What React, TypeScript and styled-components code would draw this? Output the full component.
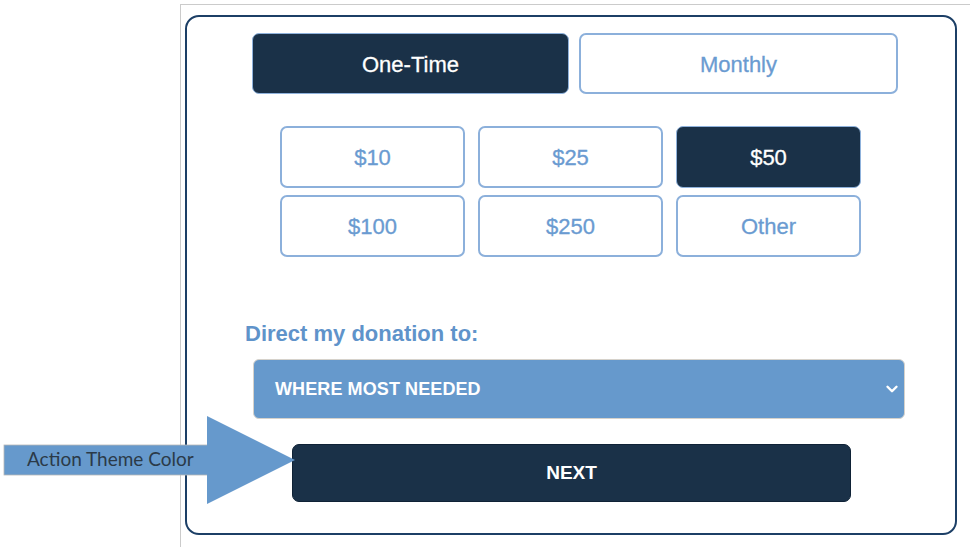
import React, { useState } from 'react'
import styled, { createGlobalStyle } from 'styled-components'
import { ChevronDown } from 'lucide-react'

const GlobalStyle = createGlobalStyle`
  html, body {
    margin: 0;
    padding: 0;
    background: #ffffff;
  }

  * {
    box-sizing: border-box;
  }
`

const NAVY = '#1a3148'
const LIGHT = '#6a9bd1'

const Page = styled.div`
  position: relative;
  width: 975px;
  height: 551px;
  padding: 4px 5px 0 180px;
  font-family: 'Liberation Sans', Arial, sans-serif;
  overflow: hidden;
`

const Frame = styled.div`
  width: 790px;
  height: 543px;
  border-top: 1px solid #cbcbcb;
  border-left: 1px solid #cbcbcb;
  padding: 10px 0 0 4px;
`

const Card = styled.div`
  width: 772px;
  height: 520px;
  border: 2px solid #1c3f66;
  border-radius: 14px;
  display: flex;
  flex-direction: column;
  align-items: flex-start;
`

const ToggleRow = styled.div`
  margin: 16px 0 0 65px;
  display: grid;
  grid-template-columns: 317px 319px;
  column-gap: 10px;
`

const ChoiceButton = styled.button<{ $active?: boolean; $height: number }>`
  height: ${(p) => p.$height}px;
  border-radius: 7px;
  border: ${(p) => (p.$active ? `1px solid #8fb2dc` : `2px solid #8cb0db`)};
  background: ${(p) => (p.$active ? NAVY : '#ffffff')};
  color: ${(p) => (p.$active ? '#ffffff' : LIGHT)};
  font-family: 'Liberation Sans', Arial, sans-serif;
  font-size: 22px;
  font-weight: 400;
  padding: 2px 0 0;
  -webkit-text-stroke: 0.3px currentColor;
  cursor: pointer;
`

const AmountGrid = styled.div`
  margin: 32px 0 0 93px;
  display: grid;
  grid-template-columns: repeat(3, 185px);
  column-gap: 13px;
  row-gap: 7px;
`

const Label = styled.div`
  margin: 64px 0 0 58px;
  font-size: 22px;
  line-height: 26px;
  font-weight: 700;
  color: #5f93ca;
`

const SelectBox = styled.div`
  margin: 12px 0 0 66px;
  width: 652px;
  height: 60px;
  border-radius: 6px;
  border: 1px solid #d6d2cb;
  background: #6699cc;
  color: #ffffff;
  display: flex;
  align-items: center;
  justify-content: space-between;
  padding: 0 3px 0 21px;
  font-size: 18px;
  font-weight: 700;
  letter-spacing: 0.1px;
  cursor: pointer;
`

const NextButton = styled.button`
  margin: 25px 0 0 105px;
  width: 559px;
  height: 58px;
  border-radius: 7px;
  border: 1px solid #0f2236;
  background: ${NAVY};
  color: #ffffff;
  font-family: 'Liberation Sans', Arial, sans-serif;
  font-size: 19px;
  font-weight: 700;
  cursor: pointer;
`

const Annotation = styled.div`
  position: absolute;
  left: 0;
  top: 410px;
  width: 300px;
  height: 100px;
`

const AnnotationText = styled.span`
  position: absolute;
  left: 27px;
  top: 37px;
  font-family: Lato, 'Open Sans', sans-serif;
  font-size: 19px;
  color: #2b3a48;
  white-space: nowrap;
`

const amounts = ['$10', '$25', '$50', '$100', '$250', 'Other']

export default function App() {
  const [frequency, setFrequency] = useState('one-time')
  const [amount, setAmount] = useState('$50')

  return (
    <>
      <GlobalStyle />
      <Page>
        <Frame>
          <Card>
            <ToggleRow>
              <ChoiceButton
                $height={61}
                $active={frequency === 'one-time'}
                onClick={() => setFrequency('one-time')}
              >
                One-Time
              </ChoiceButton>
              <ChoiceButton
                $height={61}
                $active={frequency === 'monthly'}
                onClick={() => setFrequency('monthly')}
              >
                Monthly
              </ChoiceButton>
            </ToggleRow>

            <AmountGrid>
              {amounts.map((a) => (
                <ChoiceButton
                  key={a}
                  $height={62}
                  $active={amount === a}
                  onClick={() => setAmount(a)}
                >
                  {a}
                </ChoiceButton>
              ))}
            </AmountGrid>

            <Label>Direct my donation to:</Label>
            <SelectBox>
              <span>WHERE MOST NEEDED</span>
              <ChevronDown size={18} strokeWidth={3.2} color="#ffffff" />
            </SelectBox>

            <NextButton type="button">NEXT</NextButton>
          </Card>
        </Frame>

        {/* callout arrow pointing at the action button */}
        <Annotation>
          <svg width="300" height="100" viewBox="0 0 300 100">
            <rect x="4" y="35" width="204" height="30" fill="#6699cc" stroke="#b7b7b7" strokeWidth="0.8" />
            <polygon points="207,6 207,94 295,50" fill="#6699cc" />
          </svg>
          <AnnotationText>Action Theme Color</AnnotationText>
        </Annotation>
      </Page>
    </>
  )
}
